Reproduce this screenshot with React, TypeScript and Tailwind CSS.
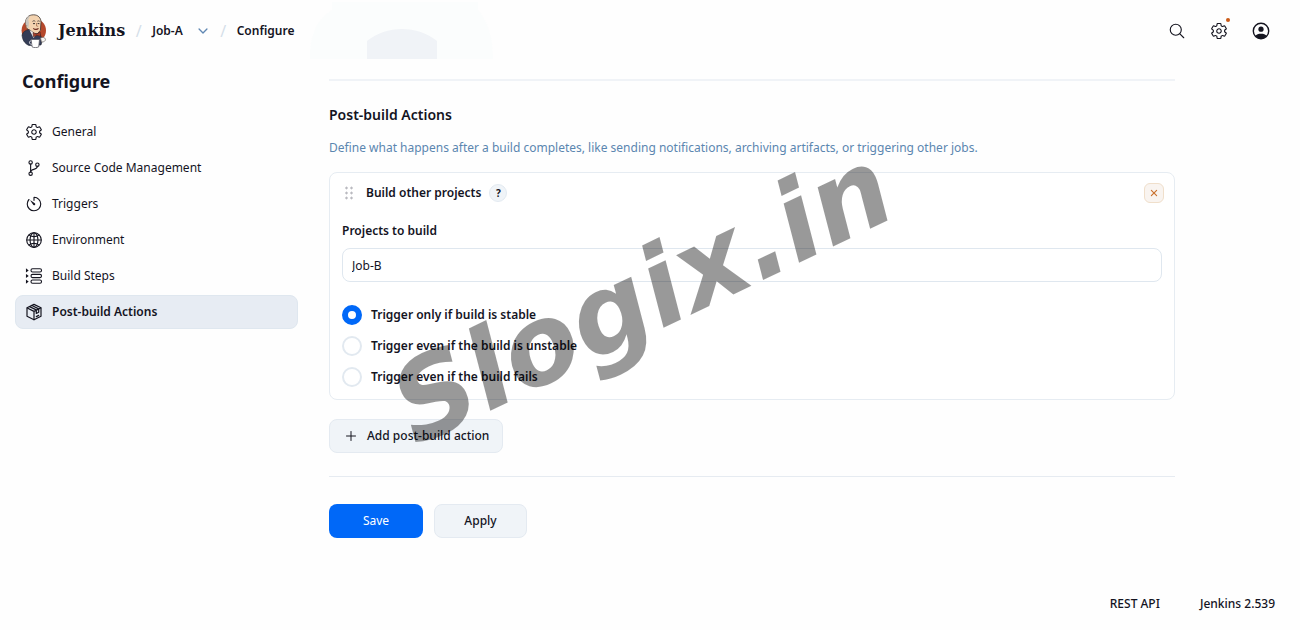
import type { ReactNode } from 'react';
import {
  IoAdd,
  IoChevronDown,
  IoClose,
  IoGitBranchOutline,
  IoGlobeOutline,
  IoSearchOutline,
  IoSettingsOutline,
  IoTimerOutline,
} from 'react-icons/io5';

function JenkinsLogo() {
  return (
    <svg viewBox="0 0 26 34" className="h-[34px] w-[26px] shrink-0" aria-hidden="true">
      <ellipse cx="12.800" cy="16.500" rx="12.200" ry="12" fill="#b5482b" />
      <path d="M4.500 9C4.500 4 7.500.8 12.500.8c4.600 0 7.500 3 7.500 7.500l-.6 8-3.400 4-6-1L6 14z" fill="#f3d3b0" stroke="#3c3330" strokeWidth=".8" />
      <path d="M4.600 9.500C4.500 5 6.500 2.200 9.500 1.400c-1.500 1.600-1.500 3-2.300 4.200L8 9l-.6 5.500C5.600 14 4.600 12 4.600 9.500z" fill="#c9c5be" />
      <path d="M6 11.500c-1.200 0-1.400 2.800.6 3.300" fill="#f3d3b0" stroke="#6e4f3d" strokeWidth=".7" />
      <path d="M11.500 7.400c.8-.8 2-.8 2.800 0M16.300 7.400c.7-.7 1.700-.7 2.400 0" fill="none" stroke="#3c3330" strokeWidth=".8" />
      <path d="M12 9.600h2M16.600 9.600h1.800" stroke="#3c3330" strokeWidth="1" />
      <path d="M15.500 9v3l1.700.3" fill="none" stroke="#a9704c" strokeWidth=".8" />
      <path d="M12.300 14.400c1.500 1.500 4 1.300 5.200 0" fill="none" stroke="#6d2d20" strokeWidth="1.200" />
      <path d="M1 21c1-3.200 3.500-4.800 7-5.500l5.500 4 5.500.5 2.500 6-1.500 5-12 .5C3.500 29.500 1.500 26 1 21z" fill="#343c56" stroke="#20242f" strokeWidth=".6" />
      <path d="M8.500 16l4 8 3-3.500z" fill="#f4f2ef" />
      <path d="M12 18.500l3.500 1.500 3.800-1.800.2 4-3.500-.8-3.500 1.400z" fill="#a53f2a" stroke="#4b211c" strokeWidth=".6" />
      <path d="M19.500 24c2-1.200 4.600-.6 5 1.200.2 1.600-1.500 3-4 2.800z" fill="#f7f5f3" stroke="#76706c" strokeWidth=".7" />
      <path d="M10 25.500h8.500l-.8 7.500c-2 .8-4.800.8-6.500 0z" fill="#fff" stroke="#5d5d66" strokeWidth=".8" />
      <path d="M10 27c-2.200-.3-2.200 3.600.8 3.300" fill="none" stroke="#d8d8dc" strokeWidth="1" />
    </svg>
  );
}

function StepsIcon() {
  return (
    <svg viewBox="0 0 18 18" className="size-[18px]" fill="none" stroke="currentColor" strokeWidth="1.100" aria-hidden="true">
      <rect x="6" y="1.800" width="10.500" height="3.200" rx="1.500" />
      <rect x="6" y="7.400" width="10.500" height="3.200" rx="1.500" />
      <rect x="6" y="13" width="10.500" height="3.200" rx="1.500" />
      <path d="M1.500 2.400l1.300 1-1.300 1zM1.500 8l1.300 1-1.300 1zM1.500 13.600l1.300 1-1.300 1z" />
    </svg>
  );
}

function PackageIcon() {
  return (
    <svg viewBox="0 0 18 18" className="size-[18px]" fill="none" stroke="currentColor" strokeWidth="1.200" strokeLinejoin="round" strokeLinecap="round" aria-hidden="true">
      <path d="M9 1.400l7 3.400v8.400L9 16.800 2 13.200V4.800z" />
      <path d="M2.300 5L9 8.400 15.700 5M9 8.400v8.200M4.600 3.600l6.700 3.300v3.600l2.400-1.200V5.900L6.900 2.500" />
      <path d="M11.300 13.600l2.400-1.200" />
    </svg>
  );
}

function UserIcon() {
  return (
    <svg viewBox="0 0 18 18" className="size-[18px]" aria-hidden="true">
      <circle cx="9" cy="9" r="7.700" fill="none" stroke="currentColor" strokeWidth="1.400" />
      <circle cx="9" cy="7.200" r="2.600" fill="currentColor" />
      <path d="M3.300 14c1-1.700 3.300-2.300 5.700-2.300s4.700.6 5.700 2.300A7.700 7.700 0 0 1 9 16.700 7.700 7.700 0 0 1 3.300 14z" fill="currentColor" />
    </svg>
  );
}

function DragHandle() {
  return (
    <svg viewBox="0 0 10 14" className="h-[14px] w-[10px]" fill="none" stroke="#a3a3ab" aria-hidden="true">
      {[2, 7, 12].map((y) => (
        <g key={y}>
          <circle cx="2.500" cy={y} r=".8" />
          <circle cx="7.500" cy={y} r=".8" />
        </g>
      ))}
    </svg>
  );
}

const navItems: { label: string; icon: ReactNode; active?: boolean }[] = [
  { label: 'General', icon: <IoSettingsOutline className="size-[18px]" /> },
  { label: 'Source Code Management', icon: <IoGitBranchOutline className="size-[18px]" /> },
  { label: 'Triggers', icon: <IoTimerOutline className="size-[18px]" /> },
  { label: 'Environment', icon: <IoGlobeOutline className="size-[18px]" /> },
  { label: 'Build Steps', icon: <StepsIcon /> },
  { label: 'Post-build Actions', icon: <PackageIcon />, active: true },
];

const triggerOptions = [
  { value: 'stable', label: 'Trigger only if build is stable' },
  { value: 'unstable', label: 'Trigger even if the build is unstable' },
  { value: 'fails', label: 'Trigger even if the build fails' },
];

function Header() {
  return (
    <header className="relative flex h-[62px] items-center justify-between pr-[30px] pl-[21px]">
      <svg viewBox="0 0 184 60" className="absolute top-0 left-[310px] h-[60px] w-[184px]" aria-hidden="true">
        <path d="M22 2h146v8c9 10 15 26 15 49H0c0-23 6-39 22-49z" fill="#fbfdfd" />
        <path d="M57 59V41c10-8 22-12 35-12s25 4 35 12v18z" fill="#f0f3f7" />
      </svg>
      <nav className="flex items-center text-xs font-semibold" aria-label="Breadcrumb">
        <a href="#home" className="flex items-center gap-[11px]">
          <JenkinsLogo />
          <span className="font-['DejaVu_Serif',serif] text-base font-bold">Jenkins</span>
        </a>
        <span className="w-[27px] text-center text-base font-normal text-[#d5dfe9]">/</span>
        <a href="#job">Job-A</a>
        <button type="button" aria-label="Job menu" className="ml-[13px] text-[#5f87b3]">
          <IoChevronDown className="size-[14px]" />
        </button>
        <span className="w-[27px] text-center text-base font-normal text-[#d5dfe9]">/</span>
        <a href="#configure">Configure</a>
      </nav>
      <div className="flex items-center gap-6">
        <button type="button" aria-label="Search">
          <IoSearchOutline className="size-[18px]" />
        </button>
        <button type="button" aria-label="Manage Jenkins" className="relative">
          <IoSettingsOutline className="size-[18px]" />
          <span className="absolute -top-1 -right-[2px] size-1 rounded-full bg-[#cb5a17]" />
        </button>
        <button type="button" aria-label="User">
          <UserIcon />
        </button>
      </div>
    </header>
  );
}

function Sidebar() {
  return (
    <aside className="w-[283px] shrink-0">
      <h1 className="mt-[5px] ml-[7px] text-lg leading-7 font-bold">Configure</h1>
      <nav className="mt-5 flex flex-col gap-[2px]">
        {navItems.map((item) => (
          <a
            key={item.label}
            href="#section"
            className={`flex h-[34px] items-center gap-[9px] rounded-lg border px-[9px] ${
              item.active ? 'border-[#dfe7ef] bg-[#e7ecf3] font-semibold' : 'border-transparent'
            }`}
          >
            {item.icon}
            {item.label}
          </a>
        ))}
      </nav>
    </aside>
  );
}

function PostBuildCard() {
  return (
    <section className="mt-[14px] rounded-lg border border-[#e6ecf2] bg-white px-3 pt-[10px] pb-3">
      <div className="flex items-center">
        <span className="ml-[2px]">
          <DragHandle />
        </span>
        <h3 className="ml-3 font-semibold">Build other projects</h3>
        <button
          type="button"
          aria-label="Help"
          className="ml-2 size-[18px] rounded-full border border-[#e3eaf1] bg-[#f0f4f8] text-[10px] leading-4 font-bold"
        >
          ?
        </button>
        <button
          type="button"
          aria-label="Remove"
          className="-mr-[2px] ml-auto flex size-5 items-center justify-center rounded-md border border-[#f0dfcb] bg-[#f9f4f0] text-[#c9702c]"
        >
          <IoClose className="size-3" />
        </button>
      </div>
      <label htmlFor="projects" className="mt-[18px] block font-semibold">
        Projects to build
      </label>
      <input
        id="projects"
        type="text"
        defaultValue="Job-B"
        className="mt-[7px] h-[34px] w-full rounded-lg border border-[#dfe7ef] bg-white px-[9px] outline-none"
      />
      <div className="mt-[23px] flex flex-col gap-[11px]">
        {triggerOptions.map((option) => (
          <label key={option.value} className="flex items-center gap-[9px] font-semibold">
            <input
              type="radio"
              name="threshold"
              value={option.value}
              defaultChecked={option.value === 'stable'}
              className="size-5 appearance-none rounded-full border-2 border-[#e2e9f0] bg-white checked:border-[6px] checked:border-[#0068f8]"
            />
            {option.label}
          </label>
        ))}
      </div>
    </section>
  );
}

export default function App() {
  return (
    <div className="relative flex min-h-screen flex-col overflow-hidden bg-[#fefefe] font-['Noto_Sans',sans-serif] text-xs leading-5 text-[#14141f]">
      <Header />
      <div className="flex flex-1 gap-[31px] pr-[125px] pl-[15px]">
        <Sidebar />
        <main className="min-w-0 flex-1">
          <hr className="mt-[17px] border-t-2 border-[#f0f3f7]" />
          <h2 className="mt-[22px] text-sm leading-6 font-semibold">Post-build Actions</h2>
          <p className="mt-[11px] text-[#5b86b0]">
            Define what happens after a build completes, like sending notifications, archiving artifacts, or triggering
            other jobs.
          </p>
          <PostBuildCard />
          <button
            type="button"
            className="mt-[19px] flex h-[34px] items-center gap-2 rounded-lg border border-[#e4eaf1] bg-[#f0f4f8] px-[13px] font-medium"
          >
            <IoAdd className="size-4" />
            Add post-build action
          </button>
          <hr className="mt-[23px] border-[#e6ebf1]" />
          <div className="mt-[27px] flex gap-[11px]">
            <button type="submit" className="h-[34px] w-[94px] rounded-lg bg-[#0068f8] text-white">
              Save
            </button>
            <button
              type="button"
              className="h-[34px] w-[93px] rounded-lg border border-[#e4eaf1] bg-[#f0f4f8] font-medium"
            >
              Apply
            </button>
          </div>
        </main>
      </div>
      <footer className="flex justify-end gap-10 pr-[25px] pb-4 font-medium">
        <a href="#api">REST API</a>
        <a href="#version">Jenkins 2.539</a>
      </footer>
      <div
        className="pointer-events-none absolute top-[232px] left-[373px] -rotate-[25.6deg] font-['DejaVu_Sans',sans-serif] text-[110px] leading-[128px] font-bold text-black/40 italic"
        aria-hidden="true"
      >
        Slogix.in
      </div>
    </div>
  );
}
